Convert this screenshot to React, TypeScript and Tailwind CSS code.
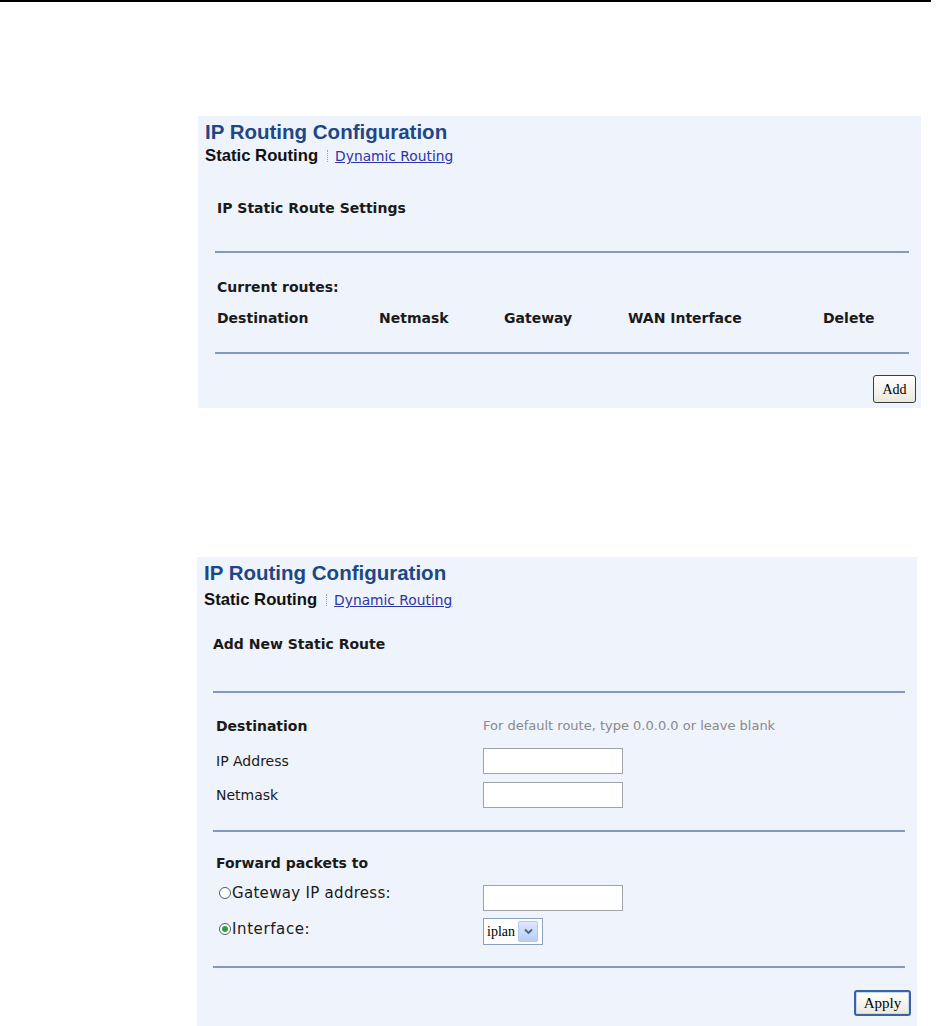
import React from "react";

const SANS = "font-[family-name:DejaVu_Sans,Verdana,sans-serif]";
const ARIAL = "font-[family-name:Liberation_Sans,Arial,sans-serif]";
const SERIF = "font-[family-name:Liberation_Serif,Times_New_Roman,serif]";

function Header({ gap }: { gap: "a" | "b" }) {
  return (
    <>
      <div
        className={`ml-[7px] mt-[4px] h-[24px] text-[20.5px] leading-[24px] font-bold text-[#1d4787] ${ARIAL}`}
      >
        IP Routing Configuration
      </div>
      <div
        className={`ml-[7px] flex h-[20px] items-baseline ${gap === "a" ? "mt-[2px]" : "mt-[5px]"}`}
      >
        <span className={`text-[16.7px] leading-[20px] font-bold text-[#111111] ${ARIAL}`}>
          Static Routing
        </span>
        <span className="ml-[9px] mr-[7px] inline-block h-[12px] self-center border-l border-dotted border-[#a0a0a0]" />
        <a
          href="#"
          className={`text-[13.8px] leading-[20px] text-[#2e33a8] underline ${SANS}`}
        >
          Dynamic Routing
        </a>
      </div>
    </>
  );
}

function Rule({ ml, w, mt }: { ml: string; w: string; mt: string }) {
  return <div className={`${ml} ${w} ${mt} h-[2px] bg-[#8698bc]`} />;
}

function Radio({ checked }: { checked?: boolean }) {
  return (
    <span className="flex h-[12px] w-[12px] shrink-0 items-center justify-center rounded-full border border-[#4d5b6b] bg-white">
      {checked && <span className="h-[6px] w-[6px] rounded-full bg-[#2f9e3a]" />}
    </span>
  );
}

function TextBox() {
  return (
    <div className="h-[26px] w-[140px] border border-[#9ea4aa] bg-white" />
  );
}

export default function App() {
  return (
    <div className={`min-h-[1026px] w-[942px] bg-white text-[14px] text-[#1a1a1a] ${SANS}`}>
      <div className="h-[2px] w-[931px] bg-black" />

      {/* Panel 1 */}
      <div className="ml-[198px] mt-[114px] flex h-[292px] w-[723px] flex-col bg-[#eff3fb]">
        <Header gap="a" />
        <div className="ml-[19px] mt-[32px] h-[20px] leading-[20px] font-bold">
          IP Static Route Settings
        </div>
        <Rule ml="ml-[17px]" w="w-[694px]" mt="mt-[33px]" />
        <div className="ml-[19px] mt-[24px] h-[20px] leading-[20px] font-bold">
          Current routes:
        </div>
        <div className="ml-[19px] mt-[11px] flex h-[20px] leading-[20px] font-bold">
          <span className="w-[162px]">Destination</span>
          <span className="w-[125px]">Netmask</span>
          <span className="w-[124px]">Gateway</span>
          <span className="w-[195px]">WAN Interface</span>
          <span>Delete</span>
        </div>
        <Rule ml="ml-[17px]" w="w-[694px]" mt="mt-[24px]" />
        <div className="mr-[5px] mt-[21px] flex justify-end">
          <button
            className={`h-[28px] w-[43px] rounded-[3px] border border-[#3d3d3d] bg-gradient-to-b from-white to-[#ebe8dc] text-[14px] text-black ${SERIF}`}
          >
            Add
          </button>
        </div>
      </div>

      {/* Panel 2 */}
      <div className="ml-[197px] mt-[149px] flex h-[469px] w-[720px] flex-col bg-[#eff3fb]">
        <Header gap="b" />
        <div className="ml-[16px] mt-[24px] h-[20px] leading-[20px] font-bold">
          Add New Static Route
        </div>
        <Rule ml="ml-[16px]" w="w-[692px]" mt="mt-[37px]" />

        <div className="mt-[23px] flex h-[20px] items-center leading-[20px]">
          <span className="ml-[19px] w-[267px] font-bold">Destination</span>
          <span className="text-[13px] text-[#8a8a8a]">
            For default route, type 0.0.0.0 or leave blank
          </span>
        </div>

        <div className="mt-[12px] flex h-[26px] items-center">
          <span className="ml-[19px] w-[267px] leading-[20px]">IP Address</span>
          <TextBox />
        </div>
        <div className="mt-[8px] flex h-[26px] items-center">
          <span className="ml-[19px] w-[267px] leading-[20px]">Netmask</span>
          <TextBox />
        </div>

        <Rule ml="ml-[16px]" w="w-[692px]" mt="mt-[22px]" />

        <div className="ml-[19px] mt-[21px] h-[20px] leading-[20px] font-bold">
          Forward packets to
        </div>

        <div className="mt-[12px] flex h-[26px] items-start">
          <div className="ml-[22px] flex w-[264px] items-center gap-[1px] pt-[1px]">
            <Radio />
            <span className="text-[15px] leading-[14px] tracking-[0.3px]">Gateway IP address:</span>
          </div>
          <TextBox />
        </div>

        <div className="mt-[7px] flex h-[27px] items-start">
          <div className="ml-[22px] flex w-[264px] items-center gap-[1px] pt-[4px]">
            <Radio checked />
            <span className="text-[15px] leading-[14px] tracking-[0.6px]">Interface:</span>
          </div>
          <div className="flex h-[27px] w-[60px] items-center border border-[#8aa2bd] bg-white">
            <span className={`ml-[3px] w-[31px] text-[14px] text-black ${SERIF}`}>iplan</span>
            <span className="flex h-[21px] w-[20px] items-center justify-center rounded-[2px] border border-[#b6c8ec] bg-gradient-to-b from-[#dfe8fc] to-[#b9cdf6]">
              <svg width="9" height="7" viewBox="0 0 9 7">
                <path d="M1 1.5 L4.5 5 L8 1.5" fill="none" stroke="#4d6185" strokeWidth="1.8" />
              </svg>
            </span>
          </div>
        </div>

        <Rule ml="ml-[16px]" w="w-[692px]" mt="mt-[21px]" />

        <div className="mr-[6px] mt-[22px] flex justify-end">
          <button
            className={`h-[26px] w-[57px] rounded-[3px] border-2 border-[#3a63a0] bg-gradient-to-b from-white to-[#ebe8dc] text-[15px] leading-[20px] text-black shadow-[inset_0_0_0_1px_#c7d8f2] ${SERIF}`}
          >
            Apply
          </button>
        </div>
      </div>
    </div>
  );
}
